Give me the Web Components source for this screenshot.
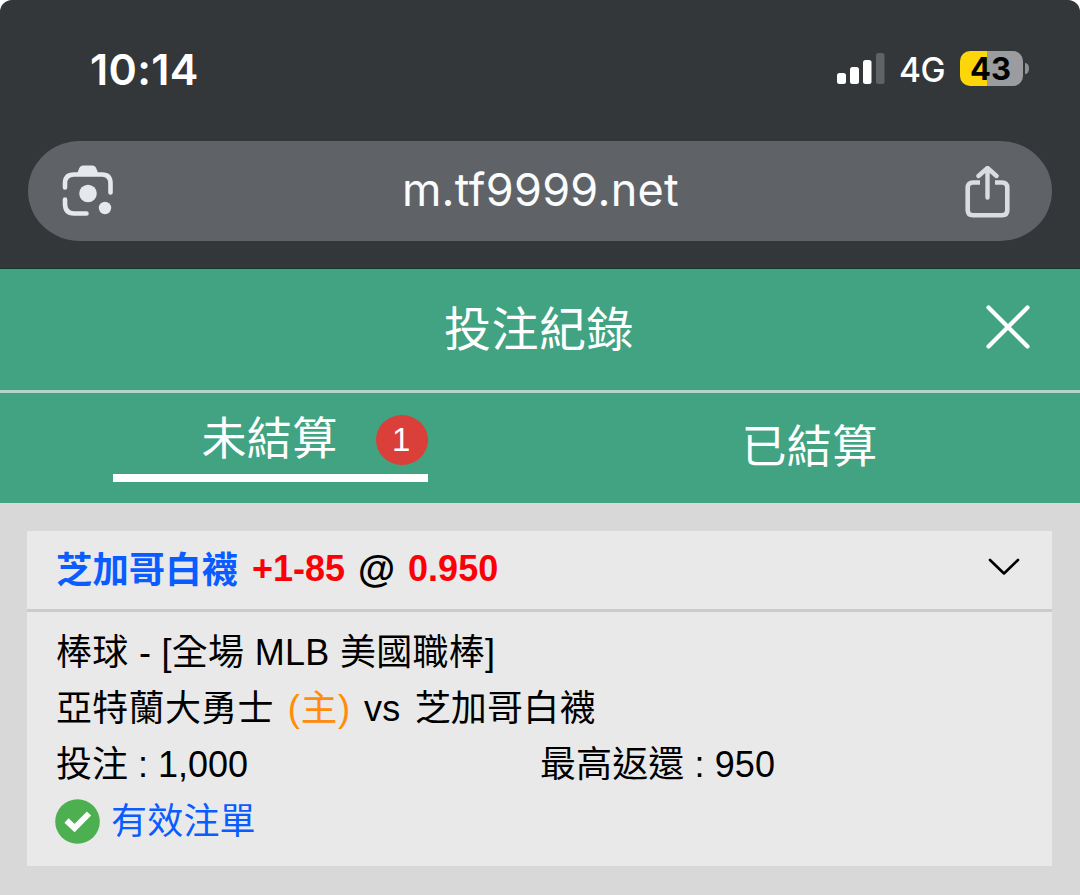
<!doctype html>
<html lang="zh-Hant">
<head>
<meta charset="utf-8" />
<title>投注紀錄</title>
<style>
  html {
    background: white;
  }

  body {
    margin: 0;
    font-family: "Liberation Sans", "Noto Sans CJK TC", sans-serif;
    color: black;
  }
</style>
</head>
<body>
<bet-app>
  <status-bar time="10:14" network="4G" battery="43"></status-bar>
  <address-bar>m.tf9999.net</address-bar>
  <page-title>投注紀錄</page-title>
  <bet-tabs>
    <bet-tab active count="1">未結算</bet-tab>
    <bet-tab>已結算</bet-tab>
  </bet-tabs>
  <bet-card team="芝加哥白襪" line="+1-85" odds="0.950">
    <bet-row>棒球 - [全場 MLB 美國職棒]</bet-row>
    <bet-row><span>亞特蘭大勇士</span><span slot="home">(主)</span><span slot="vs">vs</span><span slot="away">芝加哥白襪</span></bet-row>
    <bet-row amounts><span>投注 : 1,000</span><span slot="right">最高返還 : 950</span></bet-row>
    <bet-status>有效注單</bet-status>
  </bet-card>
</bet-app>

<script>
function define(name, render) {
  customElements.define(
    name,

    class extends HTMLElement {
      constructor() {
        super();
        this.attachShadow({ mode: "open" });
      }

      connectedCallback() {
        const template = document.createElement("template");
        template.innerHTML = render(this);
        this.shadowRoot.replaceChildren(template.content.cloneNode(true));
      }
    },
  );
}

define("bet-app", () => `
  <style>
    :host {
      display: flex;
      flex-direction: column;
      width: 1080px;
      height: 895px;
      overflow: hidden;
      border-radius: 12px 12px 0 0;
      background: #d8d8d8;
    }
  </style>
  <slot></slot>
`);

define("status-bar", (el) => `
  <style>
    :host {
      display: flex;
      align-items: center;
      box-sizing: border-box;
      height: 141px;
      padding: 0 51px 4px 90px;
      background: #33373a;
      color: white;
      font-family: Inter, sans-serif;
    }

    .time {
      margin-right: auto;
      font-size: 43px;
      font-weight: 600;
      letter-spacing: .3px;
    }

    .signal {
      width: 48px;
      height: 34px;
      margin-right: 14px;
    }

    .network {
      width: 47px;
      margin-right: 14px;
      padding-top: 3px;
      font-size: 33.5px;
      font-weight: 500;
      letter-spacing: -.4px;
      white-space: nowrap;
    }

    .battery {
      box-sizing: border-box;
      width: 63px;
      height: 35px;
      padding-right: 2px;
      border-radius: 10px;
      background: linear-gradient(90deg, #fdd60a 27px, #9b9c9f 27px);
      color: black;
      font-size: 31px;
      font-weight: 700;
      line-height: 35px;
      text-align: center;
    }

    .nub {
      width: 4px;
      height: 11px;
      margin-left: 2px;
      border-radius: 0 4px 4px 0 / 0 6px 6px 0;
      background: #8f9193;
    }
  </style>
  <span class="time">${el.getAttribute("time")}</span>
  <svg class="signal" viewBox="0 0 48 34" fill="white">
    <rect x="0" y="21" width="9" height="11" rx="2.5" />
    <rect x="13" y="15" width="9" height="17" rx="2.5" />
    <rect x="26" y="8" width="8.5" height="24" rx="2.5" />
    <rect x="39" y="1" width="8.5" height="31" rx="2.5" fill="#606366" />
  </svg>
  <span class="network">${el.getAttribute("network")}</span>
  <span class="battery">${el.getAttribute("battery")}</span>
  <span class="nub"></span>
`);

define("address-bar", () => `
  <style>
    :host {
      display: block;
      box-sizing: border-box;
      height: 128px;
      padding: 0 28px;
      background: #33373a;
      border-bottom: 1px solid #17382e;
    }

    .pill {
      display: flex;
      align-items: center;
      justify-content: space-between;
      box-sizing: border-box;
      height: 100px;
      padding: 0 42px 0 34px;
      border-radius: 52px / 50px;
      background: #5f6367;
      color: #fafbfc;
    }

    .url {
      padding: 0 0 4px 2px;
      font: 400 45px Inter, sans-serif;
      letter-spacing: .3px;
    }

    svg {
      display: block;
      fill: none;
      stroke-linecap: round;
      stroke-linejoin: round;
    }

    .share {
      margin-top: 2px;
    }
  </style>
  <div class="pill">
    <svg width="52" height="52" viewBox="0 0 52 52" stroke="#e5e8ec" stroke-width="4.6">
      <path d="M3 22.5V18.5Q3 9.5 12 9.5H40Q48.5 9.5 48.5 18.5V27.5M3 34.5V38.5Q3 48.5 12 48.5H24.5" />
      <path d="M14 10C17 7 16 .5 21.5 .5H30C35.500 .5 34.500 7 37.500 10Z" fill="#e5e8ec" stroke="none" />
      <circle cx="26" cy="28.5" r="8.8" fill="#e5e8ec" stroke="none" />
      <circle cx="43" cy="43" r="6.2" fill="#e5e8ec" stroke="none" />
    </svg>
    <span class="url"><slot></slot></span>
    <svg class="share" width="45" height="52" viewBox="0 0 45 52" stroke="#d9dce1" stroke-width="4.6">
      <path d="M15 16.5H8Q2.7 16.5 2.7 21.8V44Q2.7 49.2 8 49.2H37Q42.3 49.2 42.3 44V21.8Q42.3 16.5 37 16.5H30" stroke-linecap="butt" />
      <path d="M22.5 31.5V2M13.5 10L22.5 2L31.5 10" stroke-width="4.4" />
    </svg>
  </div>
`);

define("page-title", () => `
  <style>
    :host {
      display: grid;
      grid-template-columns: 1fr auto 1fr;
      align-items: center;
      box-sizing: border-box;
      height: 124px;
      padding: 0 48px 3px;
      border-bottom: 3px solid #b2d5c8;
      background: #41a381;
      color: white;
      font-family: "Noto Sans CJK TC", sans-serif;
      font-size: 47px;
      line-height: 60px;
    }

    .title {
      grid-column: 2;
      padding: 0 2px 5px 0;
      letter-spacing: .5px;
    }

    svg {
      justify-self: end;
      width: 48px;
      height: 48px;
      stroke: white;
      stroke-width: 4.2;
      stroke-linecap: round;
    }
  </style>
  <span class="title"><slot></slot></span>
  <svg viewBox="0 0 48 48"><path d="M4.5 3.5L43.5 42.5M43.5 3.5L4.5 42.5" /></svg>
`);

define("bet-tabs", () => `
  <style>
    :host {
      display: grid;
      grid-template-columns: 1fr 1fr;
      height: 110px;
      background: #41a381;
      color: white;
      font-family: "Noto Sans CJK TC", sans-serif;
      font-size: 45px;
    }
  </style>
  <slot></slot>
`);

define("bet-tab", (el) => `
  <style>
    :host {
      display: flex;
      justify-content: center;
      align-items: center;
      line-height: 60px;
    }

    :host([active]) {
      align-items: flex-start;
    }

    .label {
      position: relative;
      box-sizing: border-box;
      padding: 0 1px 8px 0;
      text-align: center;
      letter-spacing: .4px;
    }

    :host([active]) .label {
      width: 315px;
      height: 89px;
      padding: 13px 1px 0 0;
      border-bottom: 8px solid white;
    }

    .count {
      position: absolute;
      top: 22px;
      right: 0;
      width: 52px;
      height: 50px;
      border-radius: 50%;
      background: #da3f3a;
      font: 33px/50px "Liberation Sans", sans-serif;
    }
  </style>
  <div class="label">
    <slot></slot>
    ${el.hasAttribute("count") ? `<span class="count">${el.getAttribute("count")}</span>` : ""}
  </div>
`);

define("bet-card", (el) => `
  <style>
    :host {
      display: block;
      box-sizing: border-box;
      height: 335px;
      margin: 28px 28px 0 27px;
      background: #e9e9e9;
      font-size: 36px;
    }

    header {
      display: flex;
      align-items: center;
      box-sizing: border-box;
      height: 81px;
      padding: 0 32px 3px 29px;
      border-bottom: 3px solid #cbcbcb;
      font-size: 36px;
      font-weight: bold;
      line-height: 50px;
      white-space: nowrap;
    }

    .team {
      margin-right: 14px;
      padding-bottom: 4px;
      color: #0a5cff;
      font-family: "Noto Sans CJK TC", sans-serif;
      font-size: 36.4px;
    }

    .line,
    .odds {
      color: #fb0007;
    }

    .at {
      margin: 0 13px 0 13px;
      font-size: 38px;
    }

    svg {
      width: 32px;
      height: 18px;
      margin: 0 0 4px auto;
      fill: none;
      stroke: black;
      stroke-width: 2.6;
      stroke-linecap: round;
      stroke-linejoin: round;
    }

    .rows {
      padding: 13px 29px 0;
    }
  </style>
  <header>
    <span class="team">${el.getAttribute("team")}</span>
    <span class="line">${el.getAttribute("line")}</span>
    <span class="at">@</span>
    <span class="odds">${el.getAttribute("odds")}</span>
    <svg viewBox="0 0 32 18"><path d="M2 2L16 15.5L30 2" /></svg>
  </header>
  <div class="rows"><slot></slot></div>
`);

define("bet-row", () => `
  <style>
    :host {
      display: flex;
      align-items: center;
      height: 56px;
      line-height: 56px;
      letter-spacing: .3px;
      white-space: nowrap;
    }

    :host([amounts]) {
      height: 55px;
      letter-spacing: 0;
    }

    .left,
    .right {
      display: flex;
      flex: 1;
      height: 56px;
    }

    .right {
      padding-left: 1px;
      letter-spacing: .1px;
    }

    slot[name="home"] {
      color: #ff8c0a;
    }

    ::slotted([slot="home"]) {
      margin: 0 13px 0 14px;
      font-size: 36.5px;
      letter-spacing: .8px;
    }

    ::slotted([slot="away"]) {
      margin-left: 14px;
      letter-spacing: .2px;
    }
  </style>
  <div class="left"><slot></slot><slot name="home"></slot><slot name="vs"></slot><slot name="away"></slot></div>
  <div class="right"><slot name="right"></slot></div>
`);

define("bet-status", () => `
  <style>
    :host {
      display: flex;
      align-items: center;
      gap: 11px;
      height: 59px;
      color: #0a5cff;
      line-height: 59px;
      letter-spacing: .2px;
    }

    svg {
      width: 45px;
      height: 45px;
      margin-left: -1px;
    }
  </style>
  <svg viewBox="0 0 45 45">
    <circle cx="22.5" cy="22.5" r="22.3" fill="#4caf50" />
    <path d="M11.5 21.5L19.5 29L34 14.5" fill="none" stroke="white" stroke-width="6" />
  </svg>
  <span><slot></slot></span>
`);
</script>
</body>
</html>
